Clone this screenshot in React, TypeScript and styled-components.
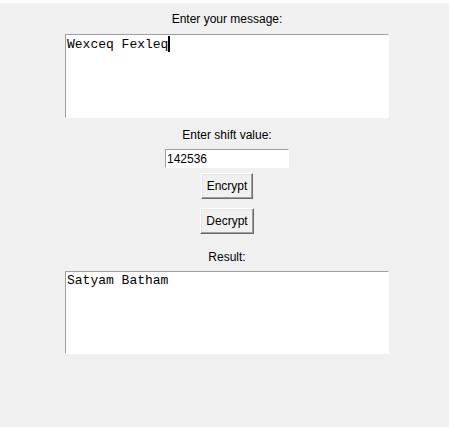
import styled, { createGlobalStyle } from "styled-components";

const Global = createGlobalStyle`
  html, body {
    margin: 0;
    padding: 0;
    background: #ffffff;
  }
`;

const Components = {
  Window: styled.div`
    margin-top: 3px;
    width: 449px;
    height: 424px;
    background: #f0f0f0;
    box-sizing: border-box;
    padding: 8px 0 0 5px;
    display: flex;
    flex-direction: column;
    align-items: center;
    font-family: "Liberation Sans", Arial, sans-serif;
    font-size: 12px;
    color: #000000;
  `,
  Label: styled.div<{ $gap: number }>`
    margin-top: ${(p) => p.$gap}px;
    line-height: 16px;
    height: 16px;
  `,
  TextBox: styled.div<{ $gap: number; $height: number }>`
    margin-top: ${(p) => p.$gap}px;
    width: 324px;
    height: ${(p) => p.$height}px;
    box-sizing: border-box;
    background: #ffffff;
    border-top: 1px solid #a0a0a0;
    border-left: 1px solid #a0a0a0;
    border-right: 1px solid #ffffff;
    border-bottom: 1px solid #ffffff;
    padding: 1px 1px 0 1px;
    font-family: "Liberation Mono", "Courier New", monospace;
    font-size: 13px;
    line-height: 15px;
    white-space: pre;
  `,
  Caret: styled.span`
    display: inline-block;
    width: 2px;
    height: 16px;
    background: #000000;
    vertical-align: -4px;
  `,
  Entry: styled.div`
    margin-top: 6px;
    width: 124px;
    height: 19px;
    box-sizing: border-box;
    background: #ffffff;
    border-top: 1px solid #a0a0a0;
    border-left: 1px solid #a0a0a0;
    border-right: 1px solid #ffffff;
    border-bottom: 1px solid #ffffff;
    padding: 1px 0 0 1px;
    line-height: 16px;
  `,
  Button: styled.div<{ $gap: number }>`
    margin-top: ${(p) => p.$gap}px;
    height: 26px;
    box-sizing: border-box;
    padding: 0 5px;
    display: flex;
    align-items: center;
    justify-content: center;
    background: #f0f0f0;
    border-top: 1px solid #ffffff;
    border-left: 1px solid #ffffff;
    border-right: 1px solid #696969;
    border-bottom: 1px solid #696969;
    box-shadow: inset -1px -1px 0 #a0a0a0, inset 1px 1px 0 #e3e3e3;
    line-height: 16px;
  `,
};

export default function App() {
  return (
    <>
      <Global />
      <Components.Window>
        <Components.Label $gap={0}>Enter your message:</Components.Label>
        <Components.TextBox $gap={7} $height={84}>
          Wexceq Fexleq<Components.Caret />
        </Components.TextBox>
        <Components.Label $gap={9}>Enter shift value:</Components.Label>
        <Components.Entry>142536</Components.Entry>
        <Components.Button $gap={5}>Encrypt</Components.Button>
        <Components.Button $gap={9}>Decrypt</Components.Button>
        <Components.Label $gap={15}>Result:</Components.Label>
        <Components.TextBox $gap={6} $height={83}>
          Satyam Batham
        </Components.TextBox>
      </Components.Window>
    </>
  );
}
